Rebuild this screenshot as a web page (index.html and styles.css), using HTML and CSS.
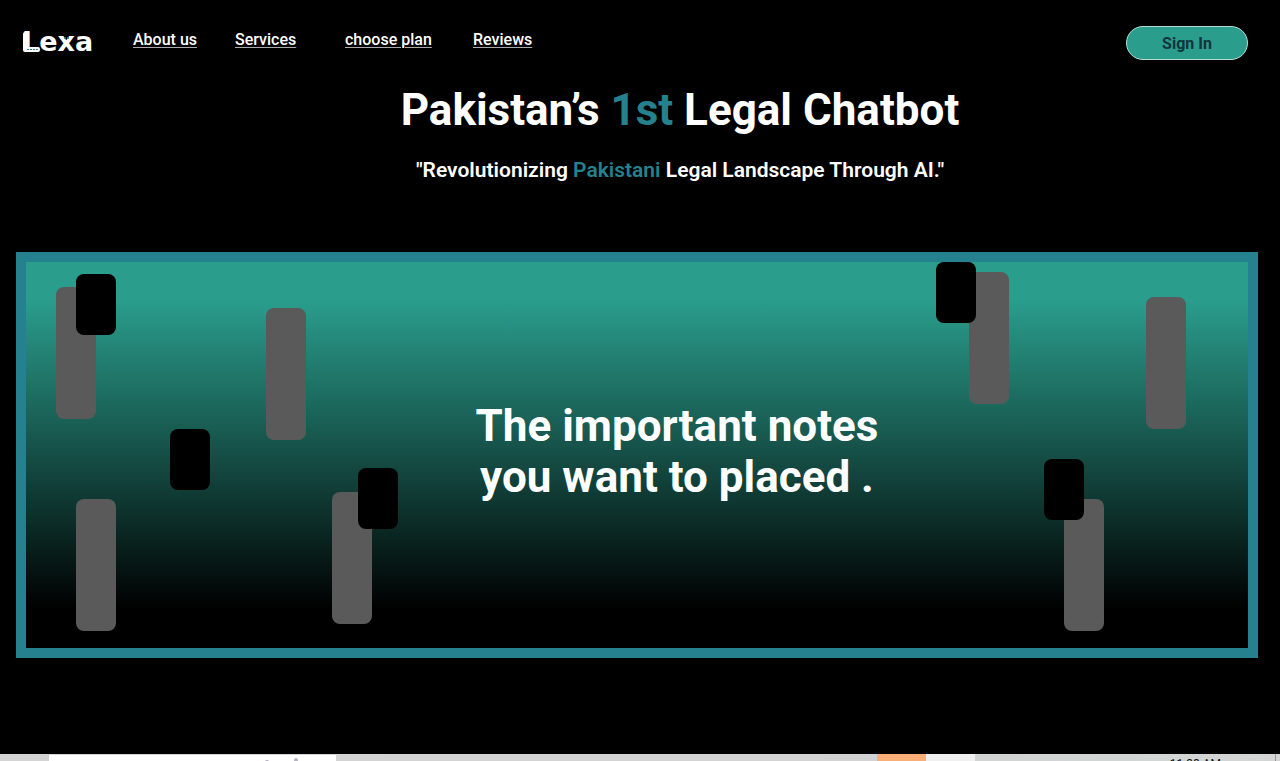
FILE: index.html
```html
<!DOCTYPE html>
<html lang="en">
<head>
<meta charset="utf-8">
<meta name="viewport" content="width=device-width, initial-scale=1">
<title>Lexa</title>
<link rel="stylesheet" href="styles.css">
</head>
<body>
<header class="topbar">
  <svg class="logo" viewBox="0 0 80 34" role="img" aria-label="Lexa">
    <text class="logo-text" x="0" y="25">Lexa</text>
    <rect x="1" y="6" width="5" height="19" rx="2" fill="#fff"/>
    <rect x="1" y="21" width="17" height="5" rx="2" fill="#fff"/>
    <g fill="#24818d">
      <rect x="5" y="23" width="2" height="1"/>
      <rect x="8" y="23" width="2" height="1"/>
      <rect x="11" y="23" width="2" height="1"/>
      <rect x="14" y="23" width="2" height="1"/>
      <circle cx="43" cy="12" r="1"/>
      <circle cx="46" cy="12" r="1"/>
    </g>
  </svg>
  <nav class="nav">
    <a href="#about">About us</a>
    <a href="#services">Services</a>
    <a href="#plans">choose plan</a>
    <a href="#reviews">Reviews</a>
  </nav>
  <button class="sign-in" type="button">Sign In</button>
</header>
<main class="main">
  <section class="hero">
    <h1 class="title">Pakistan’s <span class="accent">1st</span> Legal Chatbot</h1>
    <p class="tagline">"Revolutionizing <span class="accent">Pakistani</span> Legal Landscape Through AI."</p>
  </section>
  <section class="banner">
    <i class="bar bar-a"></i>
    <i class="bar bar-b"></i>
    <i class="bar bar-c"></i>
    <i class="bar bar-d"></i>
    <i class="bar bar-e"></i>
    <i class="bar bar-f"></i>
    <i class="bar bar-g"></i>
    <i class="block block-a"></i>
    <i class="block block-b"></i>
    <i class="block block-c"></i>
    <i class="block block-d"></i>
    <i class="block block-e"></i>
    <h2 class="notes">The important notes<br>you want to placed .</h2>
  </section>
</main>
<footer class="taskbar">
  <div class="search"><svg class="search-art" viewBox="0 0 40 6" aria-hidden="true"><path d="M2 6l1-1h2l1 1zM31 6V4h1V3h2v1h1v2z" fill="#b9b3c6"/></svg></div>
  <div class="task task-active"></div>
  <div class="task"></div>
  <div class="clock">11:38 AM</div>
</footer>
</body>
</html>
```
FILE: styles.css
```css
* {
  box-sizing: border-box;
}

body {
  display: flex;
  flex-direction: column;
  min-height: 100vh;
  margin: 0;
  background: #000;
  color: #fff;
  font-family: Roboto, "Liberation Sans", sans-serif;
}

.topbar {
  display: flex;
  align-items: flex-start;
  padding: 26px 32px 0 22px;
}

.logo {
  width: 80px;
  height: 34px;
}

.logo-text {
  fill: #fff;
  font-family: "DejaVu Sans", sans-serif;
  font-size: 27px;
  font-weight: 700;
}

.nav {
  display: grid;
  grid-template-columns: 102px 110px 128px auto;
  margin-left: 31px;
  padding-top: 4px;
}

.nav a {
  justify-self: start;
  color: #fff;
  font-size: 16px;
  font-weight: 500;
  line-height: 20px;
  text-decoration: underline;
  text-decoration-color: #aaa;
  text-decoration-thickness: 1px;
  text-underline-offset: 2px;
}

.sign-in {
  width: 122px;
  height: 34px;
  margin-left: auto;
  padding: 0;
  border: 1px solid #b5dcd5;
  border-radius: 17px;
  background: #2a9d8c;
  color: #12343b;
  font-family: inherit;
  font-size: 16px;
  font-weight: 700;
}

.main {
  flex: 1;
  padding: 0 22px 0 16px;
}

.hero {
  padding: 24px 0 68px 86px;
  text-align: center;
}

.title {
  margin: 0;
  font-size: 44px;
  font-weight: 700;
  line-height: 52px;
}

.accent {
  color: #24818d;
}

.tagline {
  margin: 20px 0 0;
  font-size: 21px;
  font-weight: 600;
  line-height: 28px;
}

.banner {
  position: relative;
  display: flex;
  align-items: center;
  justify-content: center;
  min-height: 406px;
  padding-left: 80px;
  border: 10px solid #24818d;
  background: linear-gradient(#2a9d8c 10%, #000 90%) padding-box;
}

.notes {
  position: relative;
  margin: 0;
  padding-bottom: 6px;
  font-size: 44px;
  font-weight: 700;
  line-height: 51px;
  text-align: center;
}

.bar,
.block {
  position: absolute;
  width: 40px;
  border-radius: 8px;
}

.bar {
  height: 132px;
  background: #5a5a5a;
}

.block {
  height: 61px;
  background: #000;
}

.bar-a { left: 30px; top: 25px; }
.bar-b { left: 240px; top: 46px; }
.bar-c { left: 50px; top: 237px; }
.bar-d { left: 306px; top: 230px; }
.bar-e { right: 239px; top: 10px; }
.bar-f { right: 62px; top: 35px; }
.bar-g { right: 144px; top: 237px; }
.block-a { left: 50px; top: 12px; }
.block-b { left: 144px; top: 167px; }
.block-c { left: 332px; top: 206px; }
.block-d { right: 272px; top: 0; }
.block-e { right: 164px; top: 197px; }

.taskbar {
  display: flex;
  height: 7px;
  padding-left: 49px;
  overflow: hidden;
  background: linear-gradient(90deg, #d3d4d3, #d2d2d2 70%, #d1d6d5 88%, #d4d4d4);
}

.search {
  width: 287px;
  margin: 1px 541px 0 0;
  background: #fff;
}

.search-art {
  display: block;
  width: 40px;
  height: 6px;
  margin-left: 214px;
}

.task {
  width: 49px;
  background: #f0f0f0;
}

.task-active {
  background: #f9ae77;
}

.clock {
  flex: 1;
  margin-right: 4px;
  padding: 3px 54px 0 0;
  border-right: 1px solid #999;
  color: #111;
  font-size: 12px;
  line-height: 14px;
  text-align: right;
  white-space: nowrap;
}
```
